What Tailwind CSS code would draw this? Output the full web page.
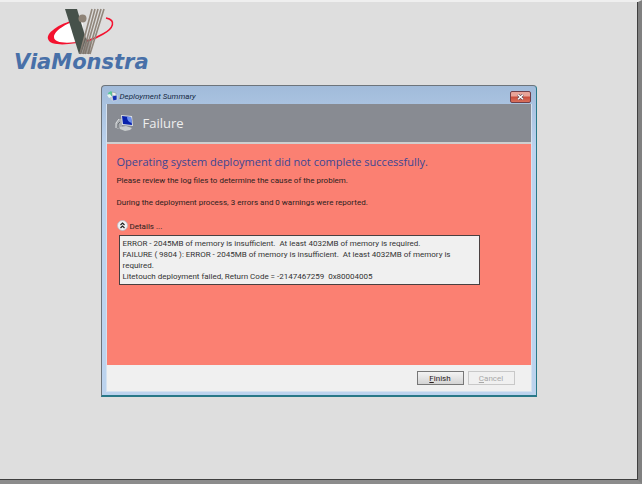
<!DOCTYPE html>
<html lang="en">
<head>
    <meta charset="UTF-8">
    <meta name="viewport" content="width=device-width, initial-scale=1.0">
    <title>Deployment Summary</title>
    <script src="https://cdn.jsdelivr.net/npm/@tailwindcss/browser@4"></script>
</head>
<body class="min-h-screen flex flex-col bg-[#dedede] border-t-2 border-t-[#efefef] border-r-4 border-r-[#808080] border-b-4 border-b-[#8c8c8c] font-[Roboto,sans-serif] text-[8px] leading-[11px] text-[#2b2020]">
    <div class="flex-1 border-r border-b border-[#3f3f3f]">
        <!-- Company logo -->
        <div class="pl-[14px] pt-[5px]">
            <svg class="block w-[104px] h-[48px]" viewBox="14 7 104 48" fill="none">
                <path d="M83 19C67 20 47 30 49 39C51 47 67 45 82 39Z" fill="#fff"/>
                <path d="M79 19C62 22 46 32 48 39C50 47 73 45 88 40C70 44 54 44 54 37C54 31 66 23 79 20Z" fill="#f3122f"/>
                <path d="M106 18C117 20 113 29 103 34C98 37 93 39 87 41" stroke="#f3122f" stroke-width="1.6"/>
                <path d="M65 9H77L86 39L81 54H79Z" fill="#46514a"/>
                <path d="M92 9L80 54M95 9L83 54M98 9L85 54M101 9L88 54M104 9L90 54" stroke="#91877c" stroke-width="1.6"/>
                <path d="M85 38L91 41L90 54H79Z" fill="#756d66" fill-opacity=".6"/>
                <circle cx="82.500" cy="18.500" r="4" fill="#8e8377"/>
            </svg>
            <p class="font-['DejaVu_Sans',sans-serif] text-[21px] leading-[14px] font-bold italic text-[#4870a8]">ViaMonstra</p>
        </div>

        <!-- Dialog window -->
        <main class="w-full max-w-[436px] mx-auto mt-4 rounded-t-[4px] border border-[#6d747b] border-r-[#287888] border-b-2 border-b-[#287888] bg-[#bcd3ee] bg-linear-to-b from-[#a1bbda] to-[#bcd3ee] to-20% px-1 pb-[3px]">
            <header class="flex items-center justify-between h-[18px] pl-px">
                <div class="flex items-center gap-[2px] pt-[3px]">
                    <svg class="w-[11px] h-[11px]" viewBox="0 0 11 11">
                        <path d="M1 2L4 0L6 2L5 5L2 5Z" fill="#55c999"/>
                        <path d="M0 4L3 3L5 6L2 7Z" fill="#e8f5ef"/>
                        <path d="M5 1L9 2V5L5 4Z" fill="#f2f2f2" stroke="#819389" stroke-width=".5"/>
                        <path d="M3 6H7V10L4 9Z" fill="#c7d0cc"/>
                        <path d="M5 5L10 4V9L6 10Z" fill="#1231b5" stroke="#dce2ea" stroke-width=".7"/>
                    </svg>
                    <h1 class="italic text-[#172b45]">Deployment Summary</h1>
                </div>
                <button type="button" aria-label="Close" class="flex items-center justify-center w-[21px] h-3 mt-1 mr-px rounded-[2px] border border-[#713f48] bg-linear-to-b from-[#e8a398] from-40% via-[#c84c3c] via-50% to-[#d9705c]">
                    <svg class="w-[7px] h-[6px]" viewBox="0 0 7 6">
                        <path d="M1 .8L6 5.200M6 .8L1 5.200" stroke="#594451" stroke-width="2.600"/>
                        <path d="M1 .8L6 5.200M6 .8L1 5.200" stroke="#fff" stroke-width="1.500"/>
                    </svg>
                </button>
            </header>

            <div class="border border-[#d5e2f0] border-t-0">
                <div class="flex items-center gap-2 h-[38px] px-2 bg-[#888b92]">
                    <svg class="w-5 h-[18px]" viewBox="0 0 20 18">
                        <path d="M1 9L4 5L7 5V14L2 15Z" fill="#a8acb0"/>
                        <path d="M1 14V9L4 5" fill="none" stroke="#dfe1e3"/>
                        <path d="M3 14V10L5 8" fill="none" stroke="#666b70"/>
                        <path d="M5 13L11 12L17 14L15 16L10 17L5 15Z" fill="#c9cccd"/>
                        <path d="M6 1L17 2L18 12L7 11Z" fill="#d8dde5"/>
                        <path d="M7 2L16 3L17 11L8 10Z" fill="#0821ac"/>
                        <path d="M12 3L16 3L17 9Q12 8 12 3Z" fill="#6b8eee"/>
                    </svg>
                    <h2 class="font-['Open_Sans',sans-serif] text-[13px] leading-5 text-[#eeeeee]">Failure</h2>
                </div>

                <section class="h-[223px] border-t-2 border-[#cfcfcf] bg-[#fb8072] px-[10px] pt-[10px]">
                    <h3 class="font-['Open_Sans',sans-serif] text-[11px] leading-4 text-[#3c4694]">Operating system deployment did not complete successfully.</h3>
                    <p class="mt-[5px]">Please review the log files to determine the cause of the problem.</p>
                    <p class="mt-[11px]">During the deployment process, 3 errors and 0 warnings were reported.</p>
                    <details open class="mt-[10px]">
                        <summary class="flex items-center gap-[2px] h-[14px]">
                            <svg class="w-[11px] h-[11px]" viewBox="0 0 11 11" fill="none">
                                <circle cx="5.500" cy="5.500" r="5" fill="#f2f2f4" stroke="#b9bac5" stroke-width=".8"/>
                                <path d="M3.500 5L5.500 3L7.500 5M3.500 8L5.500 6L7.500 8" stroke="#222" stroke-width="1.200"/>
                            </svg>
                            <span class="pt-[3px]">Details ...</span>
                        </summary>
                        <div class="mt-[3px] ml-[2px] w-full max-w-[361px] border border-[#4a4040] bg-[#f0f0f0] px-[3px] py-[2px] text-[#333333] whitespace-pre-wrap">ERROR - 2045MB of memory is insufficient.  At least 4032MB of memory is required.
FAILURE ( 9804 ): ERROR - 2045MB of memory is insufficient.  At least 4032MB of memory is required.
Litetouch deployment failed, Return Code = -2147467259  0x80004005</div>
                    </details>
                </section>

                <footer class="flex items-center justify-end gap-1 h-[26px] pr-4 bg-[#f0f0f0]">
                    <button type="button" class="w-[47px] h-[14px] flex items-center justify-center border border-[#777777] bg-linear-to-b from-[#f3f3f3] to-[#d4d4d4]"><span><u>F</u>inish</span></button>
                    <button type="button" disabled class="w-[47px] h-[14px] flex items-center justify-center border border-[#c8c8c8] bg-[#f0f0f0] text-[#a8a8a8]"><span><u>C</u>ancel</span></button>
                </footer>
            </div>
        </main>
    </div>
</body>
</html>
